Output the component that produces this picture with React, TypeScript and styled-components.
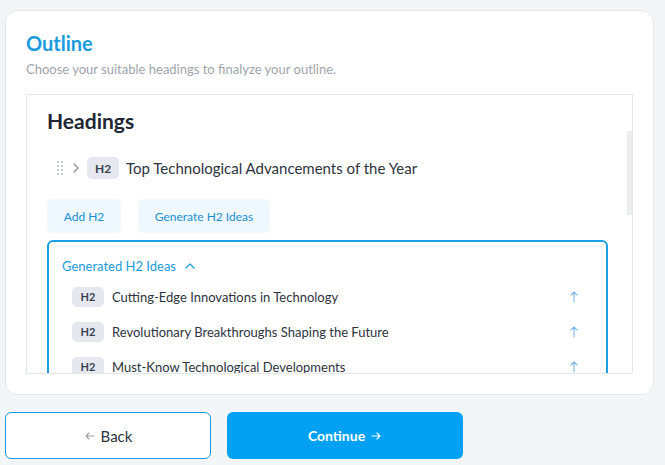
import * as React from 'react';
import styled, { createGlobalStyle } from 'styled-components';

const GlobalStyle = createGlobalStyle`
  html, body {
    margin: 0;
    padding: 0;
    background: #f3f6f9;
    font-family: Lato, 'Open Sans', sans-serif;
  }
`;

const Page = styled.div`
  width: 665px;
  height: 465px;
  padding: 10px 11px 0 5px;
  box-sizing: border-box;
  display: flex;
  flex-direction: column;
  gap: 17px;
  overflow: hidden;
`;

const Card = styled.section`
  background: #ffffff;
  border: 1px solid #e4e8ed;
  border-radius: 12px;
  padding: 20px;
  box-sizing: border-box;
  height: 385px;
  display: flex;
  flex-direction: column;
`;

const Title = styled.h1`
  margin: 0;
  font-size: 20px;
  line-height: 24px;
  font-weight: 700;
  color: #1a9be0;
`;

const Subtitle = styled.p`
  margin: 5px 0 0;
  font-size: 13px;
  line-height: 18px;
  color: #a0a5ad;
`;

const ScrollBox = styled.div`
  position: relative;
  margin-top: 16px;
  height: 280px;
  flex-shrink: 0;
  border: 1px solid #e3e6eb;
  box-sizing: border-box;
  overflow: hidden;
`;

const ScrollThumb = styled.div`
  position: absolute;
  right: 0;
  top: 36px;
  width: 5px;
  height: 84px;
  background: #eceef1;
`;

const Content = styled.div`
  padding: 12px 24px 0 20px;
`;

const SectionTitle = styled.h2`
  margin: 0;
  font-size: 21px;
  line-height: 28px;
  font-weight: 700;
  color: #222634;
`;

const HeadingRow = styled.div`
  margin-top: 22px;
  padding-left: 10px;
  display: flex;
  align-items: center;
  height: 22px;
`;

const DragHandle = styled.span`
  display: grid;
  grid-template-columns: 2px 2px;
  gap: 2px 2px;
  margin-right: 7px;
`;

const Dot = styled.span`
  width: 2px;
  height: 2px;
  background: #c6cad1;
`;

const ChevronGap = styled.span`
  width: 5px;
`;

const Badge = styled.span<{ small?: boolean }>`
  display: inline-flex;
  align-items: center;
  justify-content: center;
  width: 32px;
  height: ${(p) => (p.small ? '20px' : '22px')};
  border-radius: 5px;
  background: #e6e8ef;
  color: #3a4252;
  font-size: ${(p) => (p.small ? '11px' : '12px')};
  font-weight: 700;
  flex-shrink: 0;
`;

const HeadingText = styled.span`
  margin-left: 7px;
  font-size: 15px;
  color: #2d3340;
`;

const ButtonRow = styled.div`
  margin-top: 20px;
  display: flex;
  gap: 17px;
`;

const SoftButton = styled.button<{ w: number }>`
  width: ${(p) => p.w}px;
  height: 34px;
  border: none;
  border-radius: 6px;
  background: #eef8fe;
  color: #1a8fd6;
  font-family: inherit;
  font-size: 12px;
  padding: 0;
`;

const IdeasBox = styled.div`
  margin-top: 7px;
  border: 2px solid #1ba0e6;
  border-radius: 6px;
  padding: 16px 26px 0 13px;
  height: 200px;
  box-sizing: border-box;
`;

const IdeasHeader = styled.div`
  display: flex;
  align-items: center;
  gap: 8px;
  height: 16px;
  font-size: 13px;
  color: #1a9be0;
`;

const IdeaList = styled.div`
  margin-top: 5px;
  padding-left: 10px;
  display: flex;
  flex-direction: column;
`;

const IdeaRow = styled.div`
  display: flex;
  align-items: center;
  height: 35px;
`;

const IdeaText = styled.span`
  margin-left: 8px;
  flex: 1;
  font-size: 13px;
  color: #2d3340;
`;

const Footer = styled.div`
  display: flex;
  gap: 16px;
`;

const BackButton = styled.button`
  width: 206px;
  height: 47px;
  border: 1px solid #1a9be0;
  border-radius: 6px;
  background: #ffffff;
  color: #2d3340;
  font-family: inherit;
  font-size: 15px;
  display: flex;
  align-items: center;
  justify-content: center;
  gap: 5px;
`;

const ContinueButton = styled.button`
  width: 236px;
  height: 47px;
  border: none;
  border-radius: 6px;
  background: #03a1f4;
  color: #ffffff;
  font-family: inherit;
  font-size: 14px;
  font-weight: 700;
  display: flex;
  align-items: center;
  justify-content: center;
  gap: 5px;
`;

const ideas = [
  'Cutting-Edge Innovations in Technology',
  'Revolutionary Breakthroughs Shaping the Future',
  'Must-Know Technological Developments',
];

const Chevron = ({ dir, color, size }: { dir: 'right' | 'up'; color: string; size: number }) => (
  <svg width={size} height={size} viewBox="0 0 12 12" fill="none" stroke={color} strokeWidth="1.2" strokeLinecap="round" strokeLinejoin="round">
    {dir === 'right' ? <path d="M4 2l4 4-4 4" /> : <path d="M2 8l4-4 4 4" />}
  </svg>
);

const Arrow = ({ dir, color }: { dir: 'left' | 'right' | 'up'; color: string }) => {
  const d = {
    left: 'M10 6H2M5 3L2 6l3 3',
    right: 'M2 6h8M7 3l3 3-3 3',
    up: 'M6 11V1M3 4l3-3 3 3',
  }[dir];
  return (
    <svg width="12" height="12" viewBox="0 0 12 12" fill="none" stroke={color} strokeWidth="1.1" strokeLinecap="round" strokeLinejoin="round">
      <path d={d} />
    </svg>
  );
};

export default function App() {
  return (
    <>
      <GlobalStyle />
      <Page>
        <Card>
          <Title>Outline</Title>
          <Subtitle>Choose your suitable headings to finalyze your outline.</Subtitle>
          <ScrollBox>
            <ScrollThumb />
            <Content>
              <SectionTitle>Headings</SectionTitle>
              <HeadingRow>
                <DragHandle>
                  {Array.from({ length: 8 }).map((_, i) => (
                    <Dot key={i} />
                  ))}
                </DragHandle>
                <Chevron dir="right" color="#8a909a" size={12} />
                <ChevronGap />
                <Badge>H2</Badge>
                <HeadingText>Top Technological Advancements of the Year</HeadingText>
              </HeadingRow>
              <ButtonRow>
                <SoftButton w={74}>Add H2</SoftButton>
                <SoftButton w={132}>Generate H2 Ideas</SoftButton>
              </ButtonRow>
              <IdeasBox>
                <IdeasHeader>
                  Generated H2 Ideas
                  <Chevron dir="up" color="#1a9be0" size={12} />
                </IdeasHeader>
                <IdeaList>
                  {ideas.map((idea) => (
                    <IdeaRow key={idea}>
                      <Badge small>H2</Badge>
                      <IdeaText>{idea}</IdeaText>
                      <Arrow dir="up" color="#7fb6e8" />
                    </IdeaRow>
                  ))}
                </IdeaList>
              </IdeasBox>
            </Content>
          </ScrollBox>
        </Card>
        <Footer>
          <BackButton>
            <Arrow dir="left" color="#9aa0a8" />
            Back
          </BackButton>
          <ContinueButton>
            Continue
            <Arrow dir="right" color="#ffffff" />
          </ContinueButton>
        </Footer>
      </Page>
    </>
  );
}
